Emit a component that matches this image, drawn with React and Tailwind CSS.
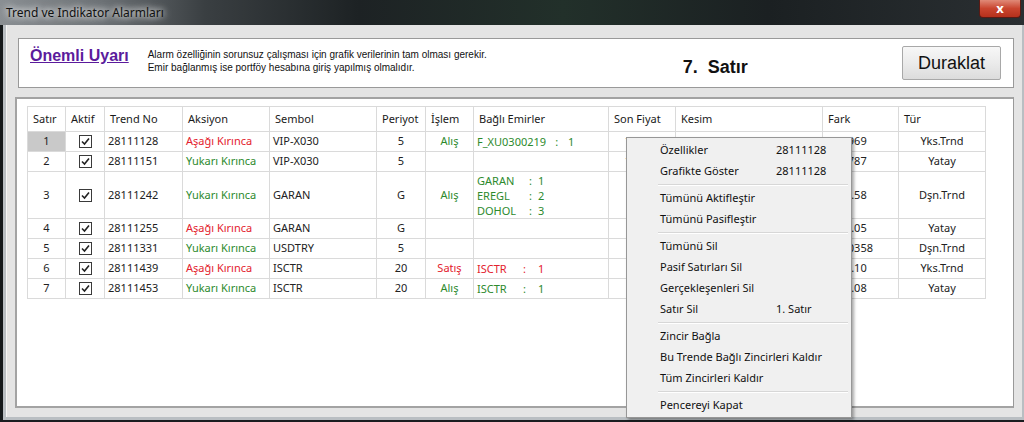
import React from "react";

const RED = "text-[#e3212d]";
const GREEN = "text-[#2d8a2d]";

const rows = [
  { n: "1", tno: "28111128", aks: "down", sem: "VIP-X030", per: "5", islem: "Alış", bag: [["F_XU0300219", "1", "mr-[9px]", "ml-[10px]"]], son: "105.47", fark: "1.20969", tur: "Yks.Trnd", h: "h-[20px]" },
  { n: "2", tno: "28111151", aks: "up", sem: "VIP-X030", per: "5", islem: "", bag: [], son: "105.47", fark: "1.20787", tur: "Yatay", h: "h-[20px]" },
  { n: "3", tno: "28111242", aks: "up", sem: "GARAN", per: "G", islem: "Alış", bag: [["GARAN", "1", "w-[52px]", "ml-[6px]"], ["EREGL", "2", "w-[52px]", "ml-[6px]"], ["DOHOL", "3", "w-[52px]", "ml-[6px]"]], son: "", fark: "1234.58", tur: "Dşn.Trnd", h: "h-[47px]" },
  { n: "4", tno: "28111255", aks: "down", sem: "GARAN", per: "G", islem: "", bag: [], son: "", fark: "1213.05", tur: "Yatay", h: "h-[20px]" },
  { n: "5", tno: "28111331", aks: "up", sem: "USDTRY", per: "5", islem: "", bag: [], son: "", fark: "10.20358", tur: "Dşn.Trnd", h: "h-[20px]" },
  { n: "6", tno: "28111439", aks: "down", sem: "ISCTR", per: "20", islem: "Satış", bag: [["ISCTR", "1", "w-[46px]", "ml-[12px]"]], son: "", fark: "1230.10", tur: "Yks.Trnd", h: "h-[20px]" },
  { n: "7", tno: "28111453", aks: "up", sem: "ISCTR", per: "20", islem: "Alış", bag: [["ISCTR", "1", "w-[46px]", "ml-[12px]"]], son: "", fark: "1254.08", tur: "Yatay", h: "h-[20px]" },
];

const headers = [
  ["Satır", "w-[38px]"],
  ["Aktif", "w-[39px]"],
  ["Trend No", "w-[78px]"],
  ["Aksiyon", "w-[87px]"],
  ["Sembol", "w-[107px]"],
  ["Periyot", "w-[49px]"],
  ["İşlem", "w-[48px]"],
  ["Bağlı Emirler", "w-[135px]"],
  ["Son Fiyat", "w-[67px]"],
  ["Kesim", "w-[147px]"],
  ["Fark", "w-[76px]"],
  ["Tür", "w-[87px]"],
];

const Check = () => (
  <svg width="13" height="13" viewBox="0 0 13 13" className="inline-block">
    <rect x="0.5" y="0.5" width="12" height="12" fill="#fff" stroke="#3a3a3a" />
    <path d="M3 6.5 L5.5 9 L10 3.5" fill="none" stroke="#222" strokeWidth="1.6" />
  </svg>
);

const menu = [
  ["Özellikler", "28111128"],
  ["Grafikte Göster", "28111128"],
  "sep",
  ["Tümünü Aktifleştir"],
  ["Tümünü Pasifleştir"],
  "sep",
  ["Tümünü Sil"],
  ["Pasif Satırları Sil"],
  ["Gerçekleşenleri Sil"],
  ["Satır Sil", "1. Satır"],
  "sep",
  ["Zincir Bağla"],
  ["Bu Trende Bağlı Zincirleri Kaldır"],
  ["Tüm Zincirleri Kaldır"],
  "sep",
  ["Pencereyi Kapat"],
];

const td = "border border-[#dadada] px-[3px] whitespace-nowrap";

export default function App() {
  return (
    <div className="relative w-[1024px] h-[422px] overflow-hidden bg-[#15191b] flex flex-col font-['Noto_Sans',sans-serif]">
      {/* title bar */}
      <div className="h-[25px] flex items-start bg-[linear-gradient(90deg,#8a8f93_0%,#6c7175_10%,#3a3f42_20%,#1d2224_35%,#22302a_55%,#1b2022_75%,#2a2f32_100%)]">
        <span className="mt-[4px] ml-[6px] text-[12px] text-[#111] [text-shadow:0_0_6px_#fff,0_0_10px_#fff]">
          Trend ve Indikator Alarmları
        </span>
        <div className="ml-auto mr-[3px] w-[42px] h-[18px] rounded-b-[4px] border border-t-0 border-[#5a1a14] bg-[linear-gradient(#e08a78,#c9452f_50%,#b5301c)] flex items-center justify-center text-white text-[13px] font-bold leading-none">
          x
        </div>
      </div>

      {/* window body */}
      <div className="flex-1 ml-[3px] bg-[#b9bec2] pl-[3px] pr-[2px] pb-[3px] flex">
        <div className="flex-1 bg-[#e4e4e4] border-l border-[#f6f6f6] flex flex-col pt-[13px] pr-[8px]">
          {/* warning panel */}
          <div className="ml-[11px] h-[50px] bg-white border border-[#999] flex items-center">
            <a className="ml-[11px] mb-[14px] text-[16px] font-bold text-[#5b1b9c] underline font-['Liberation_Sans',sans-serif]">
              Önemli Uyarı
            </a>
            <div className="ml-[19px] mb-[4px] text-[10px] leading-[13px] text-[#111] font-['Liberation_Sans',sans-serif]">
              <div>Alarm özelliğinin sorunsuz çalışması için grafik verilerinin tam olması gerekir.</div>
              <div>Emir bağlanmış ise portföy hesabına giriş yapılmış olmalıdır.</div>
            </div>
            <div className="ml-[196px] mt-[8px] text-[18px] font-bold text-[#111] whitespace-pre font-['Liberation_Sans',sans-serif]">
              7.  Satır
            </div>
            <button className="ml-auto mr-[12px] w-[99px] h-[34px] rounded-[2px] border border-[#a8a8a8] bg-[linear-gradient(#f7f7f7,#ebebeb_50%,#dcdcdc)] text-[18px] text-[#111] font-['Liberation_Sans',sans-serif]">
              Duraklat
            </button>
          </div>

          {/* table panel */}
          <div className="mt-[9px] ml-[8px] h-[311px] bg-white border-2 border-[#a3a3a3] border-r border-r-[#999] pl-[10px] pt-[7px]">
            <table className="table-fixed border-collapse text-[11px] text-[#222]">
              <thead>
                <tr className="h-[25px]">
                  {headers.map(([h, w]) => (
                    <th key={h} className={`${w} ${td} text-left font-normal text-[#1a1a1a] px-[5px]`}>
                      {h}
                    </th>
                  ))}
                </tr>
              </thead>
              <tbody>
                {rows.map((r) => (
                  <tr key={r.n} className={r.h}>
                    <td className={`${td} text-center ${r.n === "1" ? "bg-[#c9c9c9]" : ""}`}>{r.n}</td>
                    <td className={`${td} text-center leading-none`}>
                      <Check />
                    </td>
                    <td className={td}>{r.tno}</td>
                    <td className={`${td} ${r.aks === "down" ? RED : GREEN}`}>
                      {r.aks === "down" ? "Aşağı Kırınca" : "Yukarı Kırınca"}
                    </td>
                    <td className={td}>{r.sem}</td>
                    <td className={`${td} text-center`}>{r.per}</td>
                    <td className={`${td} text-center ${r.islem === "Satış" ? RED : GREEN}`}>{r.islem}</td>
                    <td className={`${td} ${r.islem === "Satış" ? RED : GREEN} leading-[15px]`}>
                      {r.bag.map(([name, n, w, g]) => (
                        <div key={name} className="flex">
                          <span className={`inline-block ${w}`}>{name}</span>
                          <span>:</span>
                          <span className={g}>{n}</span>
                        </div>
                      ))}
                    </td>
                    <td className={`${td} text-center`}>{r.son}</td>
                    <td className={td}></td>
                    <td className={td}>{r.fark}</td>
                    <td className={`${td} text-center`}>{r.tur}</td>
                  </tr>
                ))}
              </tbody>
            </table>
          </div>
        </div>
      </div>
      <div className="h-[2px] bg-[#1a1d20]"></div>

      {/* context menu */}
      <div className="absolute left-[626px] top-[137px] w-[226px] h-[281px] bg-[#f0f0f0] border border-[#979797] shadow-[2px_2px_3px_rgba(0,0,0,0.35)] pt-[2px] text-[11px] text-[#111]">
        {menu.map((m, i) =>
          m === "sep" ? (
            <div key={i} className="h-[6px] flex flex-col justify-center ml-[31px] mr-[3px]">
              <div className="h-[1px] bg-[#d7d7d7]"></div>
              <div className="h-[1px] bg-white"></div>
            </div>
          ) : (
            <div key={i} className="h-[21px] flex items-center pl-[33px] whitespace-nowrap">
              <span className="min-w-[116px]">{m[0]}</span>
              {m[1] && <span>{m[1]}</span>}
            </div>
          )
        )}
      </div>
    </div>
  );
}
